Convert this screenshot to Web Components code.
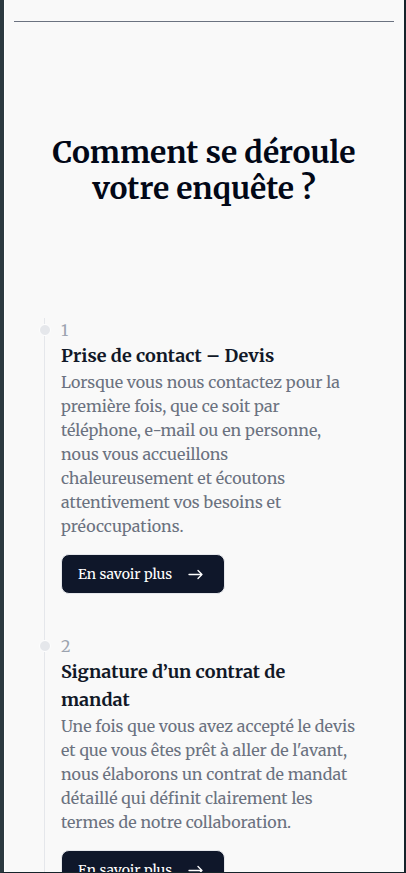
<!DOCTYPE html>
<html lang="fr">
<head>
<meta charset="utf-8">
<meta name="viewport" content="width=device-width, initial-scale=1">
<title>Comment se déroule votre enquête ?</title>
<style>
  html, body { margin: 0; height: 100%; }
  body {
    font-family: Merriweather, "DejaVu Serif", serif;
    --ink: #020817;
    --title: #111827;
    --text: #6b7280;
    --muted: #9ca3af;
    --line: #e5e7eb;
    --page: #f9f9f9;
    --dark: #0f172a;
  }
</style>
</head>
<body>
<page-frame>
  <section-heading>Comment se déroule votre enquête ?</section-heading>
  <step-list>
    <step-item number="1">
      <span slot="title">Prise de contact – Devis</span>
      Lorsque vous nous contactez pour la première fois, que ce soit par téléphone, e-mail ou en personne, nous vous accueillons chaleureusement et écoutons attentivement vos besoins et préoccupations.
    </step-item>
    <step-item number="2">
      <span slot="title">Signature d’un contrat de mandat</span>
      Une fois que vous avez accepté le devis et que vous êtes prêt à aller de l'avant, nous élaborons un contrat de mandat détaillé qui définit clairement les termes de notre collaboration.
    </step-item>
  </step-list>
</page-frame>

<script>
  function define(name, markup, setup) {
    const template = document.createElement('template');
    template.innerHTML = markup;
    customElements.define(name, class extends HTMLElement {
      constructor() {
        super();
        this.attachShadow({ mode: 'open' }).append(template.content.cloneNode(true));
      }
      connectedCallback() { if (setup) setup(this, this.shadowRoot); }
    });
  }

  define('page-frame', `
    <style>
      :host {
        display: block; box-sizing: border-box; height: 100vh;
        border: solid #15232a; border-width: 0 2px 1px 4px;
        border-left-color: #2c3a40;
        background: var(--page);
      }
      main {
        box-sizing: border-box; height: 100%; overflow-y: auto; scrollbar-width: none;
        padding: 21px 10px 0; box-shadow: inset 1px 0 #fff;
      }
      hr { margin: 0; border: 0; border-top: 1px solid #6b7280; }
    </style>
    <main><hr><slot></slot></main>`);

  define('section-heading', `
    <style>
      :host { display: block; padding: 112px 30px; }
      h2 { margin: 0; font-size: 30px; line-height: 36px; font-weight: 700; text-align: center; color: var(--ink); }
    </style>
    <h2><slot></slot></h2>`);

  define('step-list', `
    <style>
      :host { display: block; margin: 0 30px; border-left: 1px solid var(--line); }
    </style>
    <div role="list"><slot></slot></div>`);

  define('arrow-link', `
    <style>
      :host { display: block; }
      a {
        display: inline-flex; align-items: center; gap: 16px; box-sizing: border-box;
        height: 40px; padding: 0 20px 0 16px; border: 1px solid var(--line); border-radius: 8px;
        background: var(--dark); color: #fff; font-size: 14px; line-height: 20px;
        text-decoration: none; vertical-align: top; white-space: nowrap;
      }
      svg { display: block; width: 16px; height: 16px; }
    </style>
    <a href="#"><slot></slot>
      <svg viewBox="0 0 16 16" fill="none" stroke="currentColor" stroke-width="1.3" stroke-linecap="round" stroke-linejoin="round" aria-hidden="true"><path d="M1 8.5h13M10 4.5l4 4-4 4"/></svg>
    </a>`);

  define('step-item', `
    <style>
      :host { display: block; position: relative; margin-left: 16px; padding-bottom: 40px; }
      .dot {
        position: absolute; left: -22px; top: 6px; box-sizing: border-box;
        width: 12px; height: 12px; border: 1px solid #fff; border-radius: 50%; background: var(--line);
      }
      .number { display: block; font-size: 16px; line-height: 24px; color: var(--muted); }
      h3 { margin: 0; padding-right: 16px; font-size: 18px; line-height: 28px; font-weight: 700; color: var(--title); }
      p { margin: 0 0 16px; padding-right: 4px; font-size: 16px; line-height: 24px; color: var(--text); }
    </style>
    <div class="dot"></div>
    <span class="number"></span>
    <h3><slot name="title"></slot></h3>
    <p><slot></slot></p>
    <arrow-link>En savoir plus</arrow-link>`,
    (host, root) => {
      host.setAttribute('role', 'listitem');
      root.querySelector('.number').textContent = host.getAttribute('number');
    });
</script>
</body>
</html>
